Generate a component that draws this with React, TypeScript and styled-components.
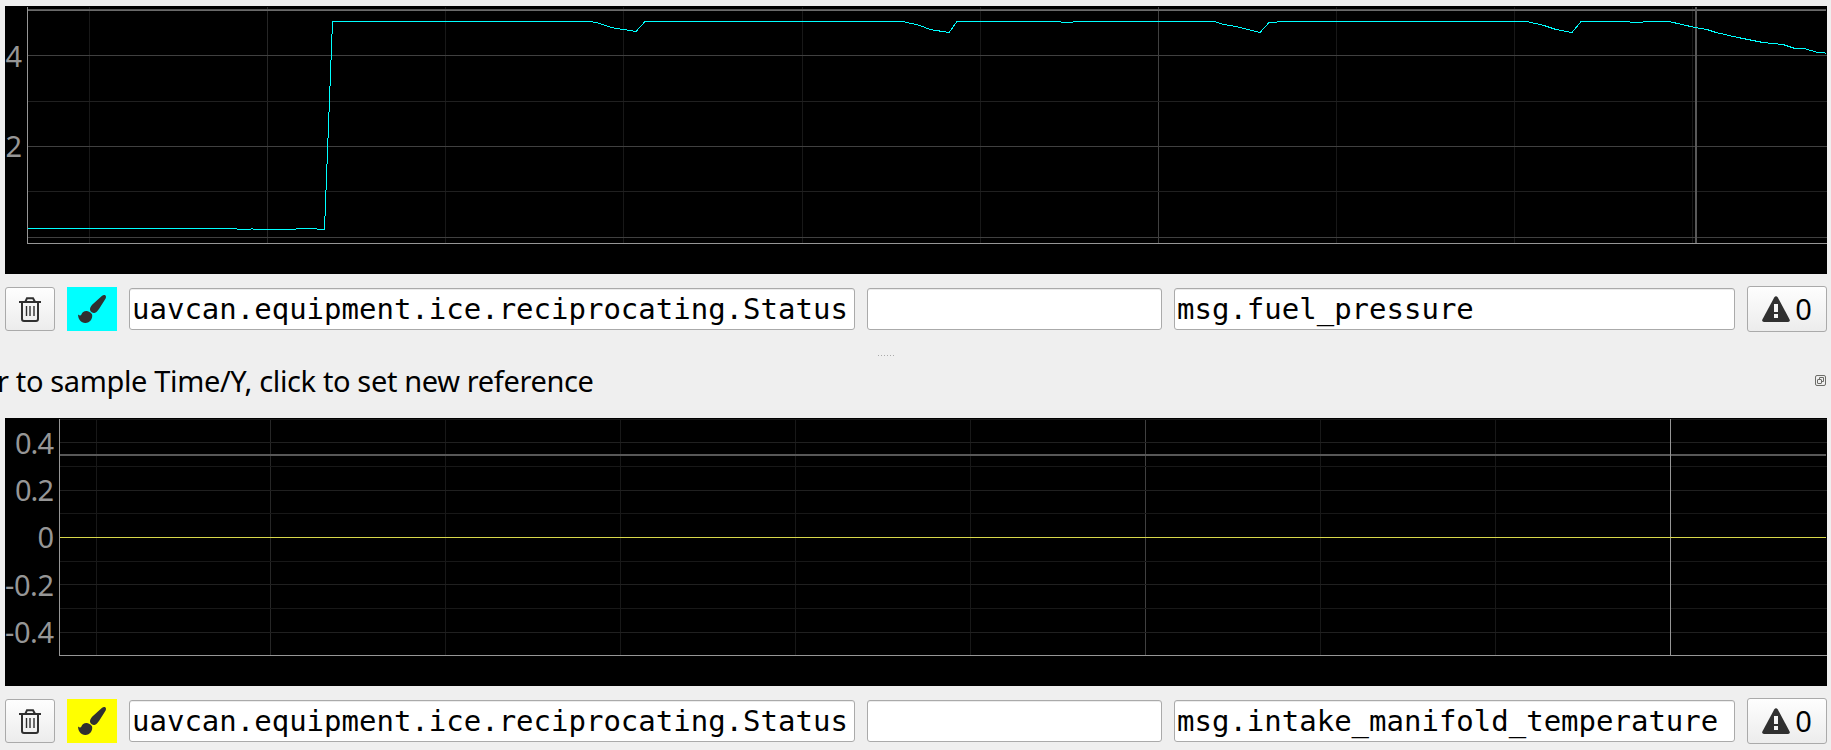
import React from 'react';
import styled, { createGlobalStyle } from 'styled-components';

const Global = createGlobalStyle`
  * { box-sizing: border-box; }
  html, body { margin: 0; height: 100%; overflow: hidden; background: #efefef; }
`;

const Page = styled.main`
  display: flex;
  flex-direction: column;
  width: 1831px;
  height: 750px;
  padding: 6px 4px 0 5px;
  overflow: hidden;
  background: #efefef;
  color: #000;
  font-family: 'Noto Sans', sans-serif;
`;

const Plot = styled.svg`
  display: block;
  flex: none;
  width: 1822px;
  height: 268px;
  background: #000;
`;

const Tick = styled.text`
  fill: #969696;
  font: 29px 'Noto Sans', sans-serif;
`;

const Controls = styled.div`
  display: flex;
  flex: none;
  align-items: center;
  gap: 12px;
  height: 46px;
  margin-top: 12px;
`;

const Button = styled.button<{ $w: number; $h: number }>`
  display: flex;
  flex: none;
  align-items: center;
  justify-content: center;
  width: ${(p) => p.$w}px;
  height: ${(p) => p.$h}px;
  padding: 0;
  border: 1px solid #aaa;
  border-radius: 3px;
  background: linear-gradient(#fefefe, #ececec);
  color: #000;
  font: 29px 'Noto Sans', sans-serif;
`;

const Swatch = styled.button<{ $color: string }>`
  flex: none;
  display: block;
  width: 50px;
  height: 44px;
  padding: 0;
  border: 0;
  background: ${(p) => p.$color};
`;

const Field = styled.div<{ $w: number }>`
  flex: none;
  width: ${(p) => p.$w}px;
  height: 42px;
  padding-left: 2px;
  border: 1px solid #aaa;
  border-radius: 3px;
  background: #fff;
  box-shadow: inset 0 1px 0 #ececec;
  font: 29px/41px 'DejaVu Sans Mono', monospace;
  white-space: pre;
  overflow: hidden;
`;

const Count = styled.span`
  display: block;
  width: 18px;
  margin-left: 4px;
  line-height: 40px;
  letter-spacing: -1px;
`;

const Splitter = styled.div`
  display: flex;
  flex: none;
  gap: 2px;
  width: 16px;
  height: 1px;
  margin: 23px 0 0 873px;
`;

const Dot = styled.i`
  width: 1px;
  height: 1px;
  background: #aaa;
`;

const DockTitle = styled.div`
  display: flex;
  flex: none;
  align-items: center;
  justify-content: space-between;
  height: 39px;
  margin: 5px 0 18px -8px;
  padding-right: 1px;
`;

const Title = styled.span`
  font-size: 29px;
  line-height: 40px;
  letter-spacing: -0.36px;
  white-space: pre;
`;

const TrashIcon = () => (
  <svg width="48" height="42" fill="none" stroke="#303030" strokeWidth="2">
    <path d="M13 14H35M19.5 13.5L21 10.2H27L28.8 13.5M16 14V31Q16 33 18 33H30Q32 33 32 31V14" />
    <path d="M20.5 18V28M24 18V28M28 18V28" strokeWidth="1.4" />
  </svg>
);

const BrushIcon = () => (
  <svg width="50" height="44" fill="#303030">
    <path d="M38.9 9.2C38.4 7.6 36.4 7.6 34.8 9L25.4 17.6C23.6 19.4 22.5 21.6 23.2 23.6C24 25.4 26.4 26.6 28 25.8C29.6 25.2 31 23.4 32 22L38 12.6C38.8 11.4 39.2 10.2 38.9 9.2Z" />
    <path d="M11 27.6C12.4 28.8 13.7 29.1 14.4 27.6C15.2 25.2 17 24 19.6 24.1C21.4 24.2 23.5 25.4 25 27.2C26.2 31.4 23 35.8 18.4 35.9C14 36 11.2 32.6 11 27.6Z" />
  </svg>
);

const WarningIcon = () => (
  <svg width="28" height="27">
    <path d="M12.2 1.4Q14 -0.8 15.8 1.4L27.6 23.4Q28.4 26 26 26H2Q-0.4 26 0.4 23.4Z" fill="#303030" />
    <path d="M12 8H16V16H12ZM12 18H16V22H12Z" fill="#f5f5f5" />
  </svg>
);

const FloatIcon = () => (
  <svg width="11" height="11" fill="none" stroke="#6c6c68">
    <rect x=".5" y=".5" width="10" height="10" rx="1.5" />
    <rect x="2.5" y="4.5" width="4" height="4" rx=".5" />
    <path d="M4.5 4.5V2.5H8.5V6.5H6.5" />
  </svg>
);

type Line = [position: number, color: string];
type ChartProps = {
  label: string;
  left: number;
  bottom: number;
  ticks: [text: string, x: number, y: number][];
  rows: Line[];
  columns: Line[];
  children: React.ReactNode;
};

/* Grid positions are the page's pixels, shifted by the viewBox of each plot. */
const Chart = ({ label, left, bottom, ticks, rows, columns, children }: ChartProps) => {
  const top = bottom - 237;
  return (
    <Plot viewBox={`5 ${top} 1822 268`} aria-label={label} shapeRendering="crispEdges">
      {columns.map(([x, c]) => <rect key={x} x={x} y={top + 1} width="1" height="237" fill={c} />)}
      {rows.map(([y, c]) => <rect key={y} x={left} y={y} width={1827 - left} height="1" fill={c} />)}
      <path d={`M${left + 0.5} ${top + 1}V${bottom + 0.5}H1827`} fill="none" stroke="#969696" />
      {children}
      {ticks.map(([t, x, y]) => <Tick key={t} x={x} y={y} textAnchor="end" textLength={t.length === 1 ? undefined : t[0] === '-' ? 49 : 39}>{t}</Tick>)}
    </Plot>
  );
};

const MINOR = '#202020';
const MAJOR = '#404040';
const FAINT = '#181818';

const pressureColumns: Line[] = [[89, FAINT], [267, '#262626'], [445, FAINT], [623, FAINT], [802, FAINT], [980, FAINT], [1158, MAJOR], [1336, FAINT], [1514, FAINT], [1692, FAINT]];
const temperatureColumns: Line[] = [[96, FAINT], [270, '#262626'], [445, FAINT], [620, FAINT], [795, FAINT], [970, FAINT], [1145, MAJOR], [1320, FAINT], [1495, FAINT]];

const pressurePath =
  'M28 228.5H236L238 229.5H250L252 228.5L254 229.5H295L297 228.5H316L318 229.5H324.5L332.5 21.5' +
  'H591L600 23.5L611 27.5L636 31.5L645 21.5H903L920 25.5L930 29.5L949 32.5L957 21.5' +
  'H1060L1062 22.5H1072L1074 21.5H1214L1224 24.5L1236 26.5L1260 32.5L1269 22.5H1276L1278 21.5' +
  'H1527L1544 25.5L1556 29.5L1572 32.5L1581 21.5H1629L1631 22.5H1642L1644 21.5H1669' +
  'L1695 27.5L1707 29.5L1716 32.5L1738 37.5L1763 42.5L1783 44.5L1795 48.5H1804L1818 52.5H1824L1826 53.5';

type RowProps = { color: string; field: string };
const SourceRow = ({ color, field }: RowProps) => (
  <Controls>
    <Button $w={50} $h={44} aria-label="Remove"><TrashIcon /></Button>
    <Swatch $color={color} aria-label="Line color"><BrushIcon /></Swatch>
    <Field $w={726}>uavcan.equipment.ice.reciprocating.Status</Field>
    <Field $w={295} />
    <Field $w={561}>{field}</Field>
    <Button $w={80} $h={46}><WarningIcon /><Count>0</Count></Button>
  </Controls>
);

export default function App() {
  return (
    <>
      <Global />
      <Page>
        <Chart
          label="Fuel pressure"
          left={27}
          bottom={243}
          ticks={[['4', 22, 67], ['2', 22, 157]]}
          columns={pressureColumns}
          rows={[[55, MAJOR], [101, MINOR], [146, MAJOR], [191, MINOR], [237, MAJOR]]}
        >
          <rect x="28" y="9" width="1798" height="2" fill="#555" />
          <rect x="28" y="10" width="1798" height="1" fill="#6a6a6a" />
          <rect x="1695" y="7" width="2" height="236" fill="#585858" />
          <path d={pressurePath} fill="none" stroke="#0ff" />
        </Chart>
        <SourceRow color="#0ff" field="msg.fuel_pressure" />
        <Splitter>{[0, 1, 2, 3, 4, 5].map((n) => <Dot key={n} />)}</Splitter>
        <DockTitle>
          <Title>r to sample Time/Y, click to set new reference</Title>
          <FloatIcon />
        </DockTitle>
        <Chart
          label="Intake manifold temperature"
          left={59}
          bottom={655}
          ticks={[['0.4', 54, 454], ['0.2', 54, 501], ['0', 54, 548], ['-0.2', 54, 596], ['-0.4', 54, 643]]}
          columns={temperatureColumns}
          rows={[[419, FAINT], [442, MINOR], [466, FAINT], [490, MINOR], [513, FAINT], [561, FAINT], [584, MINOR], [608, FAINT], [632, MINOR]]}
        >
          <rect x="60" y="454" width="1766" height="2" fill="#585858" />
          <rect x="1670" y="419" width="1" height="236" fill="#969696" />
          <rect x="60" y="537" width="1766" height="1" fill="#d8d84a" />
        </Chart>
        <SourceRow color="#ff0" field="msg.intake_manifold_temperature" />
      </Page>
    </>
  );
}
